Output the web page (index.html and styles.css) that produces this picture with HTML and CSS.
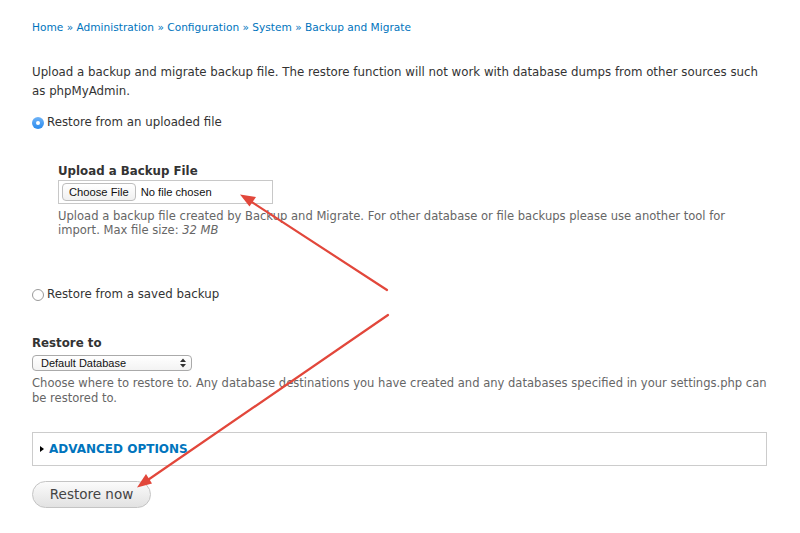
FILE: index.html
```html
<!DOCTYPE html>
<html>
<head>
<meta charset="utf-8">
<link rel="stylesheet" href="styles.css">
</head>
<body>
<div class="page">
  <nav class="breadcrumb">
    <a href="#">Home</a> » <a href="#">Administration</a> » <a href="#">Configuration</a> » <a href="#">System</a> » <a href="#">Backup and Migrate</a>
  </nav>

  <p class="intro">Upload a backup and migrate backup file. The restore function will not work with database dumps from other sources such as phpMyAdmin.</p>

  <div class="radio-row first">
    <span class="radio checked"><span class="dot"></span></span>
    <span class="radio-label">Restore from an uploaded file</span>
  </div>

  <div class="upload">
    <div class="field-label">Upload a Backup File</div>
    <div class="file-input">
      <span class="file-btn">Choose File</span>
      <span class="file-text">No file chosen</span>
    </div>
    <div class="desc">Upload a backup file created by Backup and Migrate. For other database or file backups please use another tool for import. Max file size: <em>32 MB</em></div>
  </div>

  <div class="radio-row second">
    <span class="radio"></span>
    <span class="radio-label">Restore from a saved backup</span>
  </div>

  <div class="restore-to">
    <div class="field-label">Restore to</div>
    <div class="select">
      <span>Default Database</span>
      <svg class="select-arrows" width="6" height="10" viewBox="0 0 6 10"><path d="M0 4 L3 0.5 L6 4 Z M0 6 L3 9.5 L6 6 Z" fill="#333"/></svg>
    </div>
    <div class="desc">Choose where to restore to. Any database destinations you have created and any databases specified in your settings.php can be restored to.</div>
  </div>

  <div class="fieldset">
    <span class="tri"></span>
    <a href="#" class="legend">ADVANCED OPTIONS</a>
  </div>

  <div class="actions">
    <span class="button">Restore now</span>
  </div>

  <svg class="arrows" width="800" height="533" viewBox="0 0 800 533">
    <g stroke="#e2473b" stroke-width="2.2" stroke-linecap="round" fill="none">
      <line x1="387" y1="290" x2="244" y2="197"/>
      <line x1="388" y1="315" x2="142" y2="484"/>
    </g>
    <g fill="#e2473b">
      <path d="M240 194.5 L256 197 L249.5 206.5 Z"/>
      <path d="M137 487.5 L146 474 L152 483.5 Z"/>
    </g>
  </svg>
</div>
</body>
</html>
```

FILE: styles.css
```css
html, body {
  margin: 0;
  padding: 0;
  background: #fff;
}
.page {
  position: relative;
  width: 800px;
  height: 533px;
  box-sizing: border-box;
  padding: 19px 33px 0 32px;
  font-family: "DejaVu Sans", Verdana, sans-serif;
  font-size: 11.8px;
  color: #333;
  overflow: hidden;
}
a {
  color: #0074bd;
  text-decoration: none;
}
.breadcrumb {
  color: #0074bd;
  font-size: 10.6px;
  line-height: 16px;
}
.intro {
  margin: 28px 0 0;
  line-height: 19px;
}
.radio-row {
  display: flex;
  align-items: center;
  gap: 3px;
}
.radio-row.first {
  margin-top: 13px;
}
.radio-row.second {
  margin-top: 49px;
}
.radio {
  width: 12px;
  height: 12px;
  border-radius: 50%;
  border: 1px solid #9a9a9a;
  background: #fff;
  box-sizing: border-box;
  display: flex;
  align-items: center;
  justify-content: center;
  margin-top: 2px;
}
.radio.checked {
  border: none;
  background: linear-gradient(#6fb3f7, #2a8bee);
}
.radio .dot {
  width: 4px;
  height: 4px;
  border-radius: 50%;
  background: #fff;
}
.radio-label {
  line-height: 16px;
}
.upload {
  margin: 33px 0 0 26px;
}
.field-label {
  font-weight: bold;
  font-size: 11.8px;
  line-height: 16px;
  color: #333;
}
.file-input {
  margin-top: 1px;
  width: 215px;
  height: 24px;
  box-sizing: border-box;
  border: 1px solid #c8c8c8;
  display: flex;
  align-items: center;
  padding-left: 3px;
  gap: 5px;
  font-family: "Liberation Sans", Arial, sans-serif;
  font-size: 11.2px;
  color: #111;
}
.file-btn {
  border: 1px solid #bdbdbd;
  border-radius: 4px;
  background: linear-gradient(#fff, #f0f0f0);
  padding: 1px 6px;
  line-height: 14px;
}
.desc {
  color: #666;
  font-size: 11.55px;
  line-height: 14px;
  margin-top: 5px;
}
.restore-to {
  margin-top: 33px;
}
.select {
  position: relative;
  margin-top: 4px;
  width: 160px;
  height: 16px;
  box-sizing: border-box;
  border: 1px solid #aaa;
  border-radius: 4px;
  background: linear-gradient(#fff, #f3f3f3);
  font-family: "Liberation Sans", Arial, sans-serif;
  font-size: 11px;
  color: #111;
  padding-left: 8px;
  line-height: 14px;
}
.select-arrows {
  position: absolute;
  right: 5px;
  top: 2px;
}
.restore-to .desc {
  margin-top: 5px;
  line-height: 15px;
}
.fieldset {
  margin-top: 26px;
  height: 34px;
  box-sizing: border-box;
  border: 1px solid #ccc;
  display: flex;
  align-items: center;
  padding-left: 7px;
  gap: 5px;
}
.tri {
  width: 0;
  height: 0;
  border-left: 4px solid #000;
  border-top: 3.5px solid transparent;
  border-bottom: 3.5px solid transparent;
}
.legend {
  font-weight: bold;
  font-size: 12px;
  color: #0074bd;
}
.actions {
  margin-top: 15px;
  display: flex;
}
.button {
  display: inline-block;
  width: 119px;
  height: 27px;
  box-sizing: border-box;
  border: 1px solid #c4c4c4;
  border-radius: 14px;
  background: linear-gradient(#fbfbfb, #e2e2e2);
  font-size: 13.5px;
  line-height: 25px;
  color: #444;
  text-align: center;
}
.arrows {
  position: absolute;
  left: 0;
  top: 0;
  pointer-events: none;
}
```
